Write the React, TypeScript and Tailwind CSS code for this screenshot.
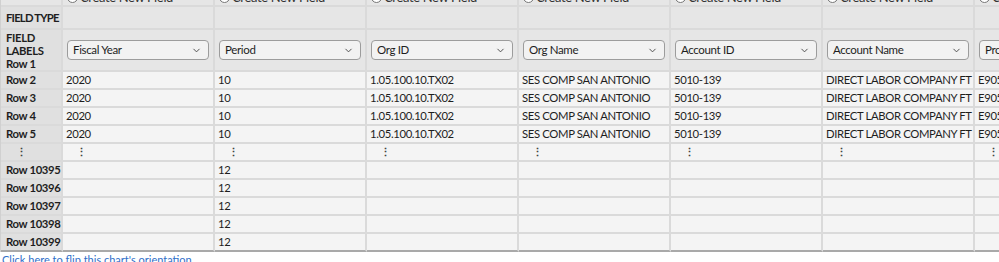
import { ChevronDown } from 'lucide-react';

const labels = ['Fiscal Year', 'Period', 'Org ID', 'Org Name', 'Account ID', 'Account Name', 'Project'];

const topRows = [
  ['Row 2', '2020', '10', '1.05.100.10.TX02', 'SES COMP SAN ANTONIO', '5010-139', 'DIRECT LABOR COMPANY FT', 'E9050'],
  ['Row 3', '2020', '10', '1.05.100.10.TX02', 'SES COMP SAN ANTONIO', '5010-139', 'DIRECT LABOR COMPANY FT', 'E9050'],
  ['Row 4', '2020', '10', '1.05.100.10.TX02', 'SES COMP SAN ANTONIO', '5010-139', 'DIRECT LABOR COMPANY FT', 'E9050'],
  ['Row 5', '2020', '10', '1.05.100.10.TX02', 'SES COMP SAN ANTONIO', '5010-139', 'DIRECT LABOR COMPANY FT', 'E9050'],
];

const bottomRows = ['Row 10395', 'Row 10396', 'Row 10397', 'Row 10398', 'Row 10399'];

const cols = 'grid grid-cols-[62px_repeat(7,152px)]';
const cell = 'border-r-2 border-b-2 border-[#dadada] overflow-hidden whitespace-nowrap';
const head = `${cell} bg-[#e0e0e0] font-bold text-[#1e1e1e] pl-[5px]`;
const data = `${cell} bg-[#f4f4f4] text-[#1e1e1e] pl-[3px]`;

function Select({ label }: { label: string }) {
  return (
    <div className="mx-[4px] flex h-[20px] items-center justify-between rounded-[4px] border border-[#9c9c9c] bg-[#f2f2f2] pl-[5px] pr-[6px]">
      <span className="text-[11.5px] text-[#1e1e1e]">{label}</span>
      <ChevronDown className="h-[11px] w-[11px] text-[#444]" strokeWidth={2} />
    </div>
  );
}

export default function App() {
  return (
    <div className="h-[262px] w-[999px] overflow-hidden bg-white font-['Lato','Open_Sans',sans-serif] text-[11.3px] leading-none tracking-[-0.35px]">
      <div className="border-l border-[#d0d0d0]">
        {/* Create field row, cut off at the top */}
        <div className={`${cols} -mt-[15px] h-[22px] bg-[#e6e6e6]`}>
          <div className={cell} />
          {labels.map((l) => (
            <div key={l} className={`${cell} flex items-end gap-[2px] pb-[1px] pl-[4px] text-[13px] text-[#333]`}>
              <span className="mb-[1px] h-[11px] w-[11px] rounded-full border border-[#777] bg-white" />
              <span>Create New Field</span>
            </div>
          ))}
        </div>

        {/* Field type */}
        <div className={`${cols} h-[23px]`}>
          <div className={`${head} flex items-center tracking-[-0.8px]`}>FIELD TYPE</div>
          {labels.map((l) => (
            <div key={l} className={`${cell} bg-[#e6e6e6]`} />
          ))}
        </div>

        {/* Field labels */}
        <div className={`${cols} h-[42px]`}>
          <div className={`${head} flex flex-col justify-center leading-[13px]`}>
            <span>FIELD</span>
            <span>LABELS</span>
            <span>Row 1</span>
          </div>
          {labels.map((l) => (
            <div key={l} className={`${cell} flex items-center bg-[#e6e6e6]`}>
              <div className="w-full">
                <Select label={l} />
              </div>
            </div>
          ))}
        </div>

        {topRows.map((r) => (
          <div key={r[0]} className={`${cols} h-[18px]`}>
            <div className={`${head} flex items-center`}>{r[0]}</div>
            {r.slice(1).map((v, i) => (
              <div key={i} className={`${data} flex items-center`}>
                {v}
              </div>
            ))}
          </div>
        ))}

        {/* Ellipsis row */}
        <div className={`${cols} h-[18px]`}>
          <div className={`${head} flex items-center pl-[15px] text-[#444]`}>⋮</div>
          {labels.map((l) => (
            <div key={l} className={`${data} flex items-center pl-[13px] font-bold text-[#444]`}>
              ⋮
            </div>
          ))}
        </div>

        {bottomRows.map((r, ri) => (
          <div key={r} className={`${cols} h-[18px]`}>
            <div className={`${head} flex items-center ${ri === 4 ? 'border-b-[#a9a9a9]' : ''}`}>{r}</div>
            {labels.map((l, i) => (
              <div key={l} className={`${data} flex items-center ${ri === 4 ? 'border-b-[#a9a9a9]' : ''}`}>
                {i === 1 ? '12' : ''}
              </div>
            ))}
          </div>
        ))}
      </div>

      <div className="pl-[2px] pt-[2px] text-[11px] tracking-normal text-[#2f6fc9]">Click here to flip this chart's orientation</div>
    </div>
  );
}
